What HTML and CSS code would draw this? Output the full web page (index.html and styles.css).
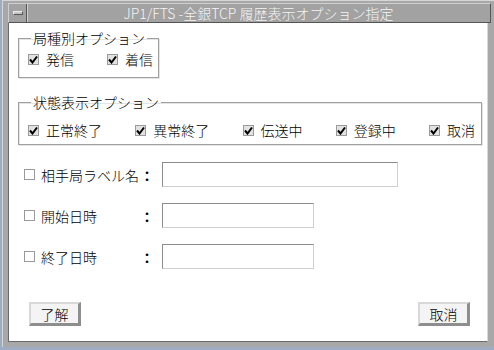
FILE: index.html
```html
<!DOCTYPE html>
<html>
<head>
  <title>JP1/FTS -全銀TCP 履歴表示オプション指定</title>
  <link rel="stylesheet" href="styles.css">
</head>
<body>
  <div class="window">
    <div class="titlebar">
      <div class="menu-btn"><span class="menu-bar"></span></div>
      <div class="title">JP1/FTS -全銀TCP 履歴表示オプション指定</div>
    </div>

    <div class="content">
      <fieldset class="group group-kind">
        <legend>局種別オプション</legend>
        <label class="check"><span class="box checked"><svg viewBox="0 0 9 9" width="9" height="9"><path d="M1 4.5 L3.5 7.5 L8 1.5" fill="none" stroke="#000" stroke-width="2"/></svg></span>発信</label>
        <label class="check"><span class="box checked"><svg viewBox="0 0 9 9" width="9" height="9"><path d="M1 4.5 L3.5 7.5 L8 1.5" fill="none" stroke="#000" stroke-width="2"/></svg></span>着信</label>
      </fieldset>

      <fieldset class="group group-state">
        <legend>状態表示オプション</legend>
        <label class="check"><span class="box checked"><svg viewBox="0 0 9 9" width="9" height="9"><path d="M1 4.5 L3.5 7.5 L8 1.5" fill="none" stroke="#000" stroke-width="2"/></svg></span>正常終了</label>
        <label class="check"><span class="box checked"><svg viewBox="0 0 9 9" width="9" height="9"><path d="M1 4.5 L3.5 7.5 L8 1.5" fill="none" stroke="#000" stroke-width="2"/></svg></span>異常終了</label>
        <label class="check"><span class="box checked"><svg viewBox="0 0 9 9" width="9" height="9"><path d="M1 4.5 L3.5 7.5 L8 1.5" fill="none" stroke="#000" stroke-width="2"/></svg></span>伝送中</label>
        <label class="check"><span class="box checked"><svg viewBox="0 0 9 9" width="9" height="9"><path d="M1 4.5 L3.5 7.5 L8 1.5" fill="none" stroke="#000" stroke-width="2"/></svg></span>登録中</label>
        <label class="check"><span class="box checked"><svg viewBox="0 0 9 9" width="9" height="9"><path d="M1 4.5 L3.5 7.5 L8 1.5" fill="none" stroke="#000" stroke-width="2"/></svg></span>取消</label>
      </fieldset>

      <div class="fields">
        <div class="field-row">
          <span class="box"></span>
          <span class="field-label">相手局ラベル名</span>
          <span class="colon">：</span>
          <span class="input input-wide"></span>
        </div>
        <div class="field-row">
          <span class="box"></span>
          <span class="field-label">開始日時</span>
          <span class="colon">：</span>
          <span class="input"></span>
        </div>
        <div class="field-row">
          <span class="box"></span>
          <span class="field-label">終了日時</span>
          <span class="colon">：</span>
          <span class="input"></span>
        </div>
      </div>

      <div class="actions">
        <button>了解</button>
        <button>取消</button>
      </div>
    </div>
  </div>
</body>
</html>
```

FILE: styles.css
```css
* {
  margin: 0;
  padding: 0;
  box-sizing: border-box;
}

body {
  width: 494px;
  height: 350px;
  overflow: hidden;
  font-family: "Noto Sans CJK JP", "DejaVu Sans", sans-serif;
  font-size: 14px;
  font-weight: 300;
  line-height: 16px;
  color: #000;
  background-color: #8a9bb6;
  background-image: radial-gradient(#b4c0d2 0.6px, transparent 0.8px);
  background-size: 2px 2px;
}

.window {
  margin-left: 2px;
  width: 492px;
  height: 347px;
  padding: 3px 3px 5px 5px;
  background: #a8a8a8;
  border-top: 1px solid #d6d6d6;
  border-left: 1px solid #d6d6d6;
  display: flex;
  flex-direction: column;
}

.titlebar {
  height: 20px;
  display: flex;
  background: #a2a2a2;
  border-top: 1px solid #d0d0d0;
  border-left: 1px solid #d0d0d0;
  border-right: 1px solid #555;
  border-bottom: 1px solid #555;
  margin-top: -1px;
}

.menu-btn {
  width: 18px;
  display: flex;
  align-items: center;
  justify-content: center;
  border-right: 1px solid #555;
  box-shadow: 1px 0 0 #d0d0d0;
}

.menu-bar {
  width: 10px;
  height: 4px;
  background: #c4c4c4;
  border-top: 1px solid #ececec;
  border-left: 1px solid #ececec;
  border-right: 1px solid #555;
  border-bottom: 1px solid #555;
}

.title {
  flex: 1;
  text-align: center;
  color: #f4f4f4;
  line-height: 18px;
}

.content {
  flex: 1;
  margin-right: 3px;
  padding-top: 7px;
  background: #fff;
  border-left: 1px solid #6a6a6a;
  border-bottom: 1px solid #6a6a6a;
  border-right: 1px solid #d8d8d8;
}

.group {
  margin-left: 9px;
  border: 1px solid #a0a0a0;
  box-shadow: 1px 1px 0 #e4e4e4, inset 1px 1px 0 #e4e4e4;
  display: flex;
  min-width: 0;
}

.group legend {
  margin-left: 3px;
  padding: 0 2px;
}

.group-kind {
  width: 141px;
  gap: 33px;
  padding: 5px 4px 10px 9px;
}

.group-state {
  width: 464px;
  margin-top: 16px;
  justify-content: space-between;
  padding: 12px 6px 6px 9px;
}

.check {
  display: flex;
  align-items: center;
  gap: 7px;
}

.box {
  width: 11px;
  height: 11px;
  border: 1px solid #9a9a9a;
  background: #fff;
  display: flex;
  align-items: center;
  justify-content: center;
}

.box.checked {
  background: #e2e2e2;
}

.fields {
  margin-top: 17px;
  display: flex;
  flex-direction: column;
  gap: 16px;
}

.field-row {
  display: flex;
  align-items: center;
  height: 25px;
  padding-left: 15px;
  white-space: nowrap;
}

.field-row .box {
  margin-right: 6px;
}

.field-label {
  width: 99px;
}

.colon {
  width: 12px;
  text-align: center;
  font-weight: bold;
}

.input {
  margin-left: 10px;
  width: 152px;
  height: 25px;
  border-top: 1px solid #8c8c8c;
  border-left: 1px solid #8c8c8c;
  border-right: 1px solid #cfcfcf;
  border-bottom: 1px solid #cfcfcf;
}

.input-wide {
  width: 236px;
}

.actions {
  margin-top: 33px;
  display: flex;
  justify-content: space-between;
  padding: 0 17px 0 20px;
}

.actions button {
  width: 52px;
  height: 24px;
  font-family: inherit;
  font-size: 14px;
  font-weight: 300;
  line-height: 16px;
  color: #000;
  background: #f4f4f4;
  border-top: 2px solid #d8d8d8;
  border-left: 2px solid #d8d8d8;
  border-right: 3px solid #8e8e8e;
  border-bottom: 3px solid #8e8e8e;
}
```
